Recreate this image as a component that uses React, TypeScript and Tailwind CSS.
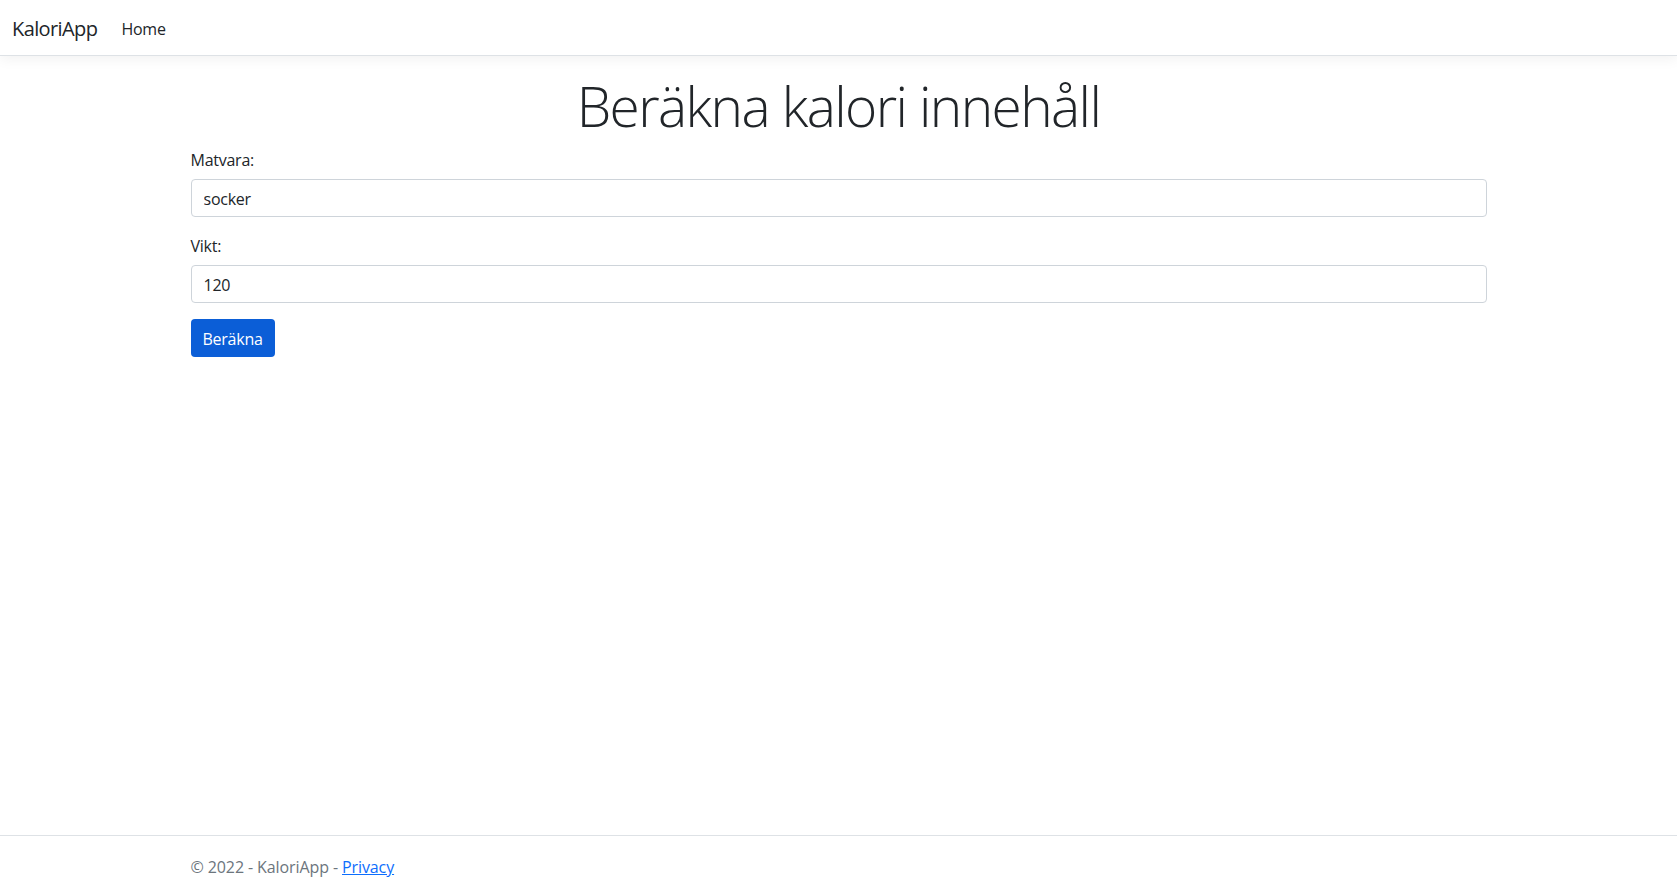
import React, { useState } from 'react';

const font = "font-['Segoe_UI','Open_Sans','Noto_Sans',sans-serif]";

export default function App() {
  const [food, setFood] = useState('socker');
  const [weight, setWeight] = useState('120');

  return (
    <div className={`${font} min-h-screen flex flex-col bg-white text-[#212529] text-base tracking-[-0.25px]`}>
      {/* Navbar */}
      <header className="h-[56px] border-b border-[#dee2e6] bg-white shadow-[0_4px_12px_rgba(0,0,0,0.05)]">
        <nav className="h-full flex items-center px-3 pt-[2px]">
          <a href="#" className="text-xl text-[#212529] mr-4 leading-[30px] tracking-[-0.6px]">KaloriApp</a>
          <a href="#" className="px-2 text-base text-[#212529] leading-6">Home</a>
        </nav>
      </header>

      {/* Main */}
      <main className="flex-1">
        <div className="w-[1320px] mx-auto px-3 pt-4 pb-4">
          <h1 className="text-center text-[55px] font-light leading-[1.2] mb-2 pt-[1px] tracking-[-1.6px]">Beräkna kalori innehåll</h1>

          <form onSubmit={(e) => e.preventDefault()}>
            <div className="mb-4">
              <label className="block mb-[7px] pt-[1px] leading-6">Matvara:</label>
              <input
                value={food}
                onChange={(e) => setFood(e.target.value)}
                className="block w-full h-[38px] px-3 pt-[2px] border border-[#ced4da] rounded-[4px] text-base text-[#212529] outline-none tracking-[-0.25px]"
              />
            </div>
            <div className="mb-4">
              <label className="block mb-[7px] pt-[1px] leading-6">Vikt:</label>
              <input
                value={weight}
                onChange={(e) => setWeight(e.target.value)}
                className="block w-full h-[38px] px-3 pt-[2px] border border-[#ced4da] rounded-[4px] text-base text-[#212529] outline-none tracking-[-0.25px]"
              />
            </div>
            <button type="submit" className="h-[38px] px-3 pt-[2px] bg-[#0b5ed7] text-white rounded-[4px] text-base">
              Beräkna
            </button>
          </form>
        </div>
      </main>

      {/* Footer */}
      <footer className="border-t border-[#dee2e6] h-[59px]">
        <div className="w-[1320px] mx-auto px-3 pt-[4px] leading-[54px] text-[#6c757d] whitespace-nowrap tracking-[-0.1px]">
          © 2022 - KaloriApp - <a href="#" className="text-[#0d6efd] underline">Privacy</a>
        </div>
      </footer>
    </div>
  );
}
